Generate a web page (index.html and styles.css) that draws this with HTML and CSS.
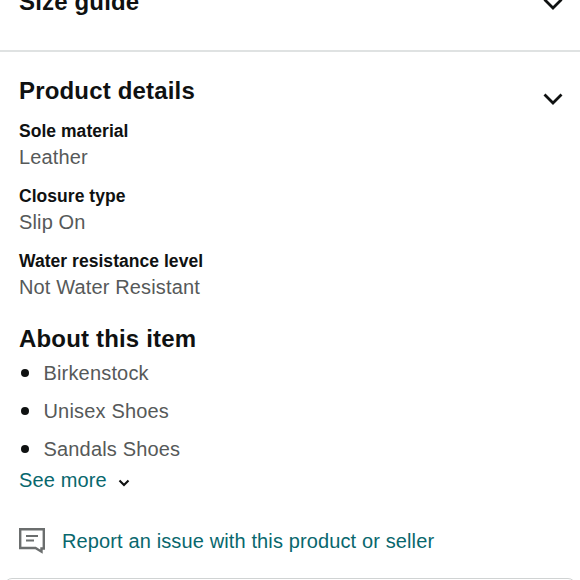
FILE: index.html
```html
<!DOCTYPE html>
<html lang="en">
<head>
<meta charset="utf-8">
<title>Product details</title>
<link rel="stylesheet" href="styles.css">
</head>
<body>
<main class="page">
  <section class="size-guide">
    <h2 class="heading size-title">Size guide</h2>
    <svg class="chevron" viewBox="0 0 20 12"><path d="M1.500 1.500 10 10l8.500-8.500"/></svg>
  </section>
  <section class="product">
    <header class="product-head">
      <h2 class="heading product-title">Product details</h2>
      <svg class="chevron" viewBox="0 0 20 12"><path d="M1.500 1.500 10 10l8.500-8.500"/></svg>
    </header>
    <dl class="specs">
      <div class="spec"><dt>Sole material</dt><dd>Leather</dd></div>
      <div class="spec"><dt>Closure type</dt><dd>Slip On</dd></div>
      <div class="spec"><dt>Water resistance level</dt><dd>Not Water Resistant</dd></div>
    </dl>
    <h2 class="heading about-title">About this item</h2>
    <ul class="features">
      <li>Birkenstock</li>
      <li>Unisex Shoes</li>
      <li>Sandals Shoes</li>
    </ul>
    <a class="more">See more<svg class="more-icon" viewBox="0 0 12 8"><path d="M1.500 1.500 6 6l4.500-4.500"/></svg></a>
    <a class="report"><svg class="report-icon" viewBox="0 0 26 26"><path d="M1.200 1.200h23.600v19.300h-2.300v3.200l-6-3.700H1.200z"/><path class="lines" d="M7 8h12M7 12.500h8"/></svg><span>Report an issue with this product or seller</span></a>
  </section>
  <div class="next-card"></div>
</main>
</body>
</html>
```
FILE: styles.css
```css
* { box-sizing: border-box; }
body { margin: 0; background: #fff; font-family: "Liberation Sans", Arial, sans-serif; color: #0f1111; }
.page { height: 580px; overflow: hidden; }
.heading { margin: 0; font-size: 24px; letter-spacing: 0.170px; line-height: 32px; font-weight: 700; white-space: nowrap; }
.size-guide { height: 52px; border-bottom: 2px solid #dfe2e2; padding: 0 17px 0 19px; display: flex; justify-content: space-between; }
.size-title { margin-top: -14px; }
.chevron { width: 20px; height: 12px; fill: none; stroke: #0f1111; stroke-width: 2.800; overflow: visible; }
.size-guide .chevron { margin-top: -2px; }
.product { padding: 23px 17px 0 19px; }
.product-head { display: flex; justify-content: space-between; height: 43px; }
.product-head .chevron { margin-top: 18px; }
.specs { margin: 0; }
.spec { height: 65px; }
dt { font-size: 17.500px; letter-spacing: 0.040px; line-height: 26px; font-weight: 700; }
dd { margin: 0; font-size: 20px; letter-spacing: 0.140px; line-height: 26px; color: #565959; }
.about-title { margin-top: 10px; }
.features { list-style: none; margin: -1px 0 0; padding: 0; letter-spacing: 0.170px; }
.features li { height: 38px; line-height: 38px; font-size: 20px; color: #565959; display: flex; align-items: center; }
.features li::before { content: ""; width: 8px; height: 8px; border-radius: 50%; background: #0f1111; margin: 0 14.500px 0 2px; }
.more { display: flex; align-items: center; height: 24px; font-size: 20px; letter-spacing: 0.130px; color: #08676d; }
.more-icon { width: 12px; height: 8px; margin: 6px 0 0 11px; fill: none; stroke: #0f1111; stroke-width: 2.100; overflow: visible; }
.report { display: flex; align-items: center; height: 30px; margin-top: 34px; font-size: 20px; letter-spacing: 0.125px; color: #08676d; }
.report-icon { width: 26px; height: 26px; margin-right: 17px; fill: none; stroke: #6b6e6e; stroke-width: 2.400; }
.lines { stroke-width: 2; }
.next-card { height: 20px; margin: 22px 4px 0; border: 1.500px solid #d0d3d3; border-radius: 8px; }
```
